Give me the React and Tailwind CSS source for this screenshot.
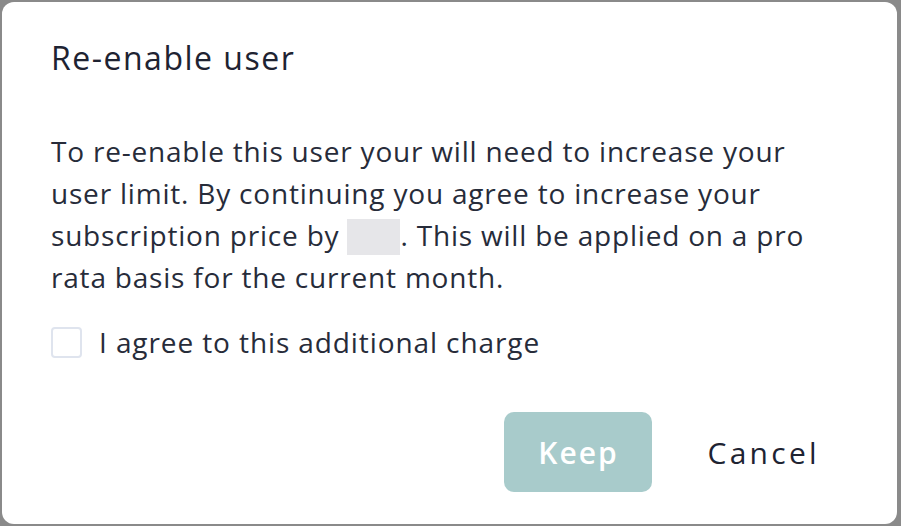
import React, { useState } from 'react';

const FONT = { fontFamily: '"Open Sans", "Liberation Sans", sans-serif' };

const ReEnableUserDialog = () => {
  const [agreed, setAgreed] = useState(false);

  return (
    <div className="h-[522px] rounded-[12px] bg-white px-[49px] pt-[36px] text-[#1e2332]" style={FONT}>
      <h2 className="text-[32px] leading-[40px] font-normal tracking-[1.5px]">Re-enable user</h2>

      <p className="mt-[52px] text-[28px] leading-[42px] tracking-[0.8px] text-[#272c3a]">
        To re-enable this user your will need to increase your
        <br />
        user limit. By continuing you agree to increase your
        <br />
        subscription price by{' '}
        <span className="inline-block h-[36px] w-[53px] bg-[#e6e6e9] align-[-9px]" />
        . This will be applied on a pro
        <br />
        rata basis for the current month.
      </p>

      <label className="mt-[23px] flex items-center gap-[17px] text-[28px] leading-[42px] tracking-[0.9px] text-[#272c3a]">
        <span
          onClick={() => setAgreed(!agreed)}
          className="h-[31px] w-[31px] rounded-[4px] border-2 border-[#dfe4ee] bg-white"
        />
        I agree to this additional charge
      </label>

      <div className="mt-[49px] flex justify-end gap-[27px]">
        <button
          disabled={!agreed}
          className="h-[80px] w-[148px] rounded-[10px] bg-[#a8cbcb] text-[30px] font-semibold tracking-[2px] text-white"
        >
          Keep
        </button>
        <button className="h-[80px] px-[28px] text-[30px] font-medium tracking-[3.3px] text-[#1e2332]">
          Cancel
        </button>
      </div>
    </div>
  );
};

export default function App() {
  return (
    <div className="h-[526px] bg-[#8a8a8a] pt-[2px] pb-[2px] pl-[2px] pr-[4px]">
      <ReEnableUserDialog />
    </div>
  );
}
